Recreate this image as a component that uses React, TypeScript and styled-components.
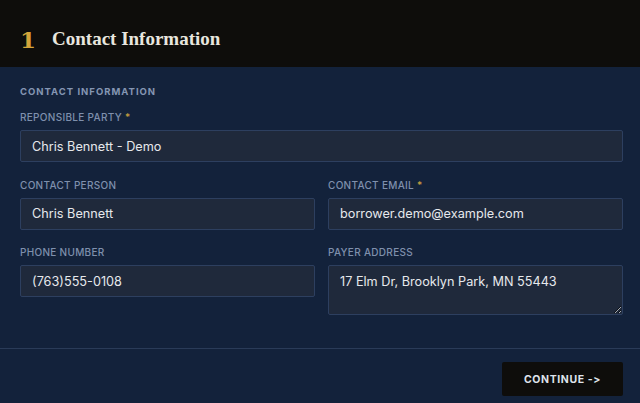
import React from "react";
import styled, { createGlobalStyle } from "styled-components";

const Global = createGlobalStyle`
  html, body { margin: 0; padding: 0; background: #13223b; }
  body { font-family: "Inter", "Noto Sans", sans-serif; }
  * { box-sizing: border-box; }
`;

const Page = styled.div`
  width: 640px;
  height: 403px;
  background: #13223b;
  display: flex;
  flex-direction: column;
  overflow: hidden;
`;

const Header = styled.header`
  height: 67px;
  background: #0e0d0b;
  display: flex;
  align-items: center;
  padding: 11px 20px 0;
  gap: 16px;
  flex-shrink: 0;
`;

const StepNum = styled.span`
  font-family: "DejaVu Serif", "Liberation Serif", serif;
  font-weight: 700;
  font-size: 23px;
  color: #d4a53a;
  line-height: 1;
`;

const Title = styled.h1`
  margin: 0;
  font-family: "Liberation Serif", "DejaVu Serif", serif;
  font-weight: 700;
  font-size: 19px;
  color: #e8e6df;
`;

const Body = styled.div`
  padding: 19px 17px 0 20px;
  display: flex;
  flex-direction: column;
`;

const SectionLabel = styled.div`
  font-size: 9.5px;
  font-weight: 700;
  letter-spacing: 1px;
  color: #8596b3;
  text-transform: uppercase;
  margin-bottom: 14px;
`;

const Grid = styled.div`
  display: grid;
  grid-template-columns: 295px 295px;
  column-gap: 13px;
  row-gap: 16.5px;
`;

const Field = styled.div<{ $full?: boolean }>`
  display: flex;
  flex-direction: column;
  gap: 7px;
  grid-column: ${(p) => (p.$full ? "1 / span 2" : "auto")};
`;

const Label = styled.label`
  font-size: 10px;
  font-weight: 500;
  letter-spacing: 0.3px;
  color: #7f90ad;
  text-transform: uppercase;
  line-height: 12px;
`;

const Star = styled.span`
  color: #c9a03f;
`;

const inputCss = `
  width: 100%;
  background: #1f293b;
  border: 1px solid #2d3f5f;
  border-radius: 2px;
  color: #e6e8ec;
  font-family: "Inter", "Noto Sans", sans-serif;
  font-size: 12.7px;
  padding: 0 11px;
  outline: none;
`;

const Input = styled.input`
  ${inputCss}
  height: 32px;
`;

const TextArea = styled.textarea`
  ${inputCss}
  height: 50px;
  padding-top: 8px;
  resize: vertical;
  line-height: 16px;
  display: block;
`;

const Divider = styled.div`
  margin-top: 33px;
  height: 1px;
  background: #2a3b58;
`;

const Footer = styled.div`
  display: flex;
  justify-content: flex-end;
  padding: 13px 17px 0 0;
`;

const Button = styled.button`
  width: 121px;
  height: 34px;
  background: #0e0d0b;
  border: none;
  border-radius: 2px;
  color: #dfe3ea;
  font-family: "Inter", "Noto Sans", sans-serif;
  font-weight: 700;
  font-size: 10.5px;
  letter-spacing: 0.6px;
  cursor: pointer;
`;

export default function App() {
  return (
    <Page>
      <Global />
      <Header>
        <StepNum>1</StepNum>
        <Title>Contact Information</Title>
      </Header>
      <Body>
        <SectionLabel>Contact Information</SectionLabel>
        <Grid>
          <Field $full>
            <Label>
              Reponsible Party <Star>*</Star>
            </Label>
            <Input defaultValue="Chris Bennett - Demo" />
          </Field>
          <Field>
            <Label>Contact Person</Label>
            <Input defaultValue="Chris Bennett" />
          </Field>
          <Field>
            <Label>
              Contact Email <Star>*</Star>
            </Label>
            <Input defaultValue="borrower.demo@example.com" />
          </Field>
          <Field>
            <Label>Phone Number</Label>
            <Input defaultValue="(763)555-0108" />
          </Field>
          <Field>
            <Label>Payer Address</Label>
            <TextArea defaultValue="17 Elm Dr, Brooklyn Park, MN 55443" />
          </Field>
        </Grid>
      </Body>
      <Divider />
      <Footer>
        <Button>CONTINUE -&gt;</Button>
      </Footer>
    </Page>
  );
}
